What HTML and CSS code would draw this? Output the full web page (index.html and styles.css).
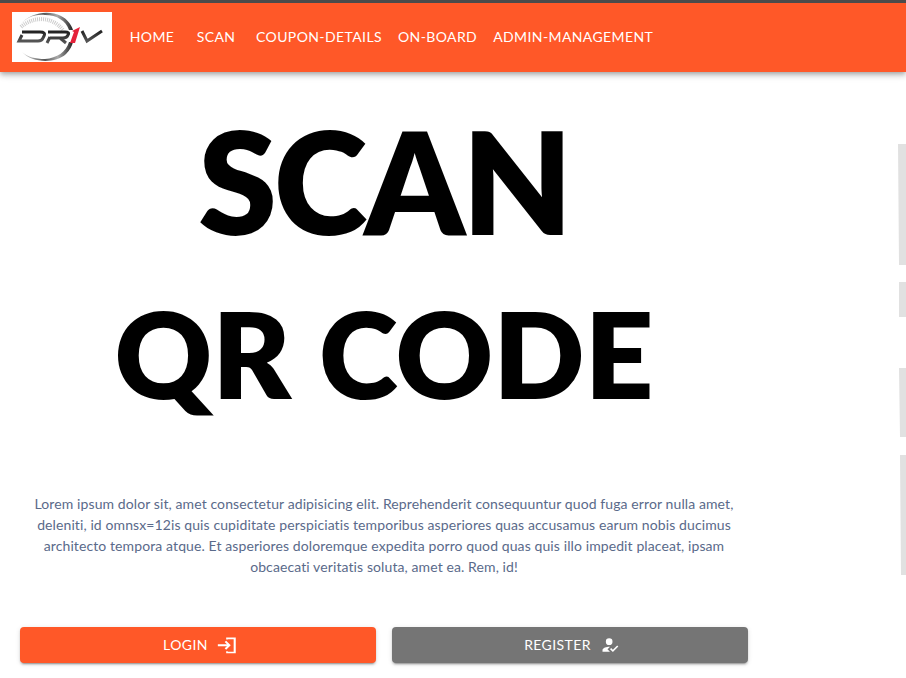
FILE: index.html
```html
<!DOCTYPE html>
<html lang="en">
<head>
<meta charset="utf-8">
<meta name="viewport" content="width=device-width, initial-scale=1">
<title>Scan QR Code</title>
<link rel="stylesheet" href="styles.css">
</head>
<body>
<header class="appbar">
  <a class="logo" href="#" aria-label="DRiV">
    <svg viewBox="0 0 100 50" width="100" height="50" aria-hidden="true">
      <defs>
        <linearGradient id="ring" x1="0" x2="1"><stop offset="0" stop-color="#ddd"/><stop offset=".45" stop-color="#555"/><stop offset=".7" stop-color="#aaa"/><stop offset="1" stop-color="#222"/></linearGradient>
        <linearGradient id="metal" x1="0" y1="0" x2="0" y2="1"><stop offset="0" stop-color="#222"/><stop offset="1" stop-color="#555"/></linearGradient>
      </defs>
      <path d="M8 13C18 0 37-2 49 4C55 7 59 12 61 18L57 18C54 9 45 3 33 3C22 2 14 6 8 13Z" fill="url(#ring)"/>
      <path d="M10 40C20 51 43 52 54 42C58 38 60 34 61 30L57 30C54 40 45 46 33 47C23 47 16 45 10 40Z" fill="url(#ring)"/>
      <path d="M9 15C20 5 39 3 51 18" fill="none" stroke="#ccc" stroke-width="4" stroke-dasharray="1 1"/>
      <g fill="none" stroke="url(#metal)" stroke-width="3">
        <path d="M10 20H28Q34 20 32 24L31 26Q30 29 26 29H7L10 23"/>
        <path d="M36 20H53Q58 20 56 23Q55 26 51 26H38M35 31L38 25M48 26L54 31"/>
        <path d="M70 19L75 29L90 19"/>
      </g>
      <path d="M60 19L68 15L63 31H58L62 20Z" fill="#e5223a"/>
    </svg>
  </a>
  <nav class="nav">
    <a href="#">HOME</a>
    <a href="#">SCAN</a>
    <a href="#">COUPON-DETAILS</a>
    <a href="#">ON-BOARD</a>
    <a href="#">ADMIN-MANAGEMENT</a>
  </nav>
</header>
<main class="hero">
  <section class="intro">
    <h1 class="title">SCAN</h1>
    <h2 class="subtitle">QR CODE</h2>
    <p class="copy">Lorem ipsum dolor sit, amet consectetur adipisicing elit. Reprehenderit consequuntur quod fuga error nulla amet, deleniti, id omnsx=12is quis cupiditate perspiciatis temporibus asperiores quas accusamus earum nobis ducimus architecto tempora atque. Et asperiores doloremque expedita porro quod quas quis illo impedit placeat, ipsam obcaecati veritatis soluta, amet ea. Rem, id!</p>
    <div class="actions">
      <button class="btn btn-login" type="button">LOGIN
        <svg viewBox="0 0 24 24" width="20" height="20" fill="currentColor" aria-hidden="true"><path d="M11 3H22.500V22H11V19.500H13V20H20V5H13V5.500H11ZM1 11.200H12L9.200 8.500L11 6.800L16.500 12.300L11 17.800L9.200 16L12 13.400H1Z"/></svg>
      </button>
      <button class="btn btn-register" type="button">REGISTER
        <svg viewBox="0 0 24 24" width="20" height="20" fill="currentColor" aria-hidden="true"><path d="M9 17L12 14.060C11.610 14.020 11.320 14 11 14C8.330 14 3 15.330 3 18V20H12L9 17ZM11 12A4 4 0 1 0 11 4A4 4 0 0 0 11 12M15.470 20.500L12 17L13.400 15.590L15.470 17.670L20.600 12.500L22 13.910L15.470 20.500"/></svg>
      </button>
    </div>
  </section>
  <div class="art" aria-hidden="true">
    <svg viewBox="0 0 8 432" width="8" height="432" fill="#e1e1e1"><path d="M0 0H8V121H1ZM1 138H8V173H1ZM1 224H8V293H2ZM2 311H8V431H3Z"/></svg>
  </div>
</main>
</body>
</html>
```
FILE: styles.css
```css
* { box-sizing: border-box; }

body {
  margin: 0;
  background: #fff;
  color: #000;
  font-family: Lato, "Liberation Sans", sans-serif;
  font-size: 14px;
  line-height: 21px;
}

.appbar {
  display: flex;
  align-items: center;
  gap: 8px;
  height: 72px;
  padding: 0 12px 1px;
  border-top: 3px solid #4b4b4b;
  background: #ff5828;
  box-shadow: 0 2px 4px -1px rgba(0, 0, 0, .2), 0 4px 5px rgba(0, 0, 0, .14), 0 1px 10px rgba(0, 0, 0, .12);
}

.logo { display: block; background: #fff; }
.logo svg { display: block; }

.nav { display: flex; }

.nav a {
  min-width: 64px;
  padding: 6px 8px 8px;
  color: #fff;
  letter-spacing: .02857em;
  text-align: center;
  text-decoration: none;
}

.hero {
  display: grid;
  grid-template-columns: 1fr 138px;
}

.intro {
  padding: 20px;
  text-align: center;
}

.title,
.subtitle {
  margin: 0;
  font-weight: 800;
}

.title { font-size: 142px; line-height: 176px; letter-spacing: -.02em; }
.subtitle { font-size: 120px; line-height: 170px; }

.copy {
  margin: 55px 0 50px;
  padding: 0 8px;
  color: #5a6a8a;
  letter-spacing: .00714em;
}

.actions {
  display: grid;
  grid-template-columns: 1fr 1fr;
  gap: 16px;
}

.btn {
  display: flex;
  align-items: center;
  justify-content: center;
  gap: 9px;
  height: 36px;
  padding: 0 4px 1px 8px;
  border: 0;
  border-radius: 4px;
  color: #fff;
  font: inherit;
  letter-spacing: .02857em;
  box-shadow: 0 3px 1px -2px rgba(0, 0, 0, .2), 0 2px 2px rgba(0, 0, 0, .14), 0 1px 5px rgba(0, 0, 0, .12);
}

.btn-login { background: #ff5828; }
.btn-register { background: #757575; }

.art {
  display: flex;
  justify-content: flex-end;
  padding-top: 72px;
}
```
